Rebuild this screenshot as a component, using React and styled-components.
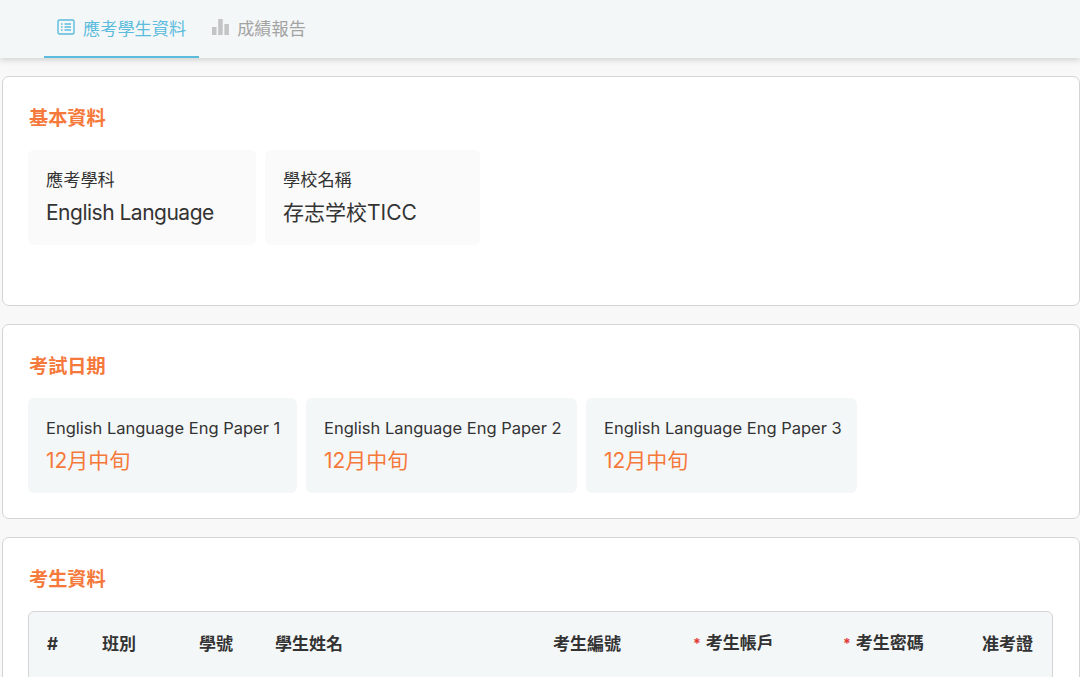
import styled, { createGlobalStyle } from "styled-components";

const GlobalStyle = createGlobalStyle`
  html, body {
    margin: 0;
    height: 100%;
    overflow: hidden;
    background: #f8f8f8;
    font-family: Inter, "Noto Sans CJK TC", sans-serif;
    color: #333;
  }
  * { box-sizing: border-box; }
`;

const Nav = styled.nav`
  display: flex;
  height: 58px;
  padding-left: 44px;
  background: #f4f7f8;
  box-shadow: 0 2px 6px rgba(0, 0, 0, 0.16);
`;

const Tab = styled.div`
  display: flex;
  align-items: center;
  gap: 8px;
  height: 58px;
  padding: 0 13px 2px;
  font-size: 17.2px;
  color: ${(p) => (p.$active ? "#5bbcdc" : "#a3a3a3")};
  border-bottom: 2px solid ${(p) => (p.$active ? "#5bbcdc" : "transparent")};
`;

const Main = styled.main`
  padding: 18px 0 0 2px;
`;

const Card = styled.section`
  height: ${(p) => p.$height}px;
  margin-bottom: 18px;
  padding: 29px 26px 0 25px;
  background: #fff;
  border: 1px solid #d4d4d4;
  border-radius: 7px;
`;

const Title = styled.h2`
  margin: 0 0 19px;
  padding-left: 1px;
  height: 25px;
  line-height: 25px;
  font-size: 19.2px;
  font-weight: 700;
  color: #f5793b;
`;

const Row = styled.div`
  display: flex;
  gap: 9px;
`;

const Item = styled.div`
  width: ${(p) => p.$width}px;
  height: 95px;
  padding: 19px 0 0 18px;
  background: ${(p) => (p.$tone === "blue" ? "#f4f7f8" : "#fafafa")};
  border-radius: 6px;
`;

const Label = styled.div`
  height: 22px;
  line-height: 22px;
  font-size: ${(p) => (p.$latin ? "16.5px" : "17.2px")};
  white-space: nowrap;
`;

const Value = styled.div`
  margin-top: 8px;
  height: 28px;
  line-height: 28px;
  font-size: 21px;
  letter-spacing: ${(p) => (p.$tight ? "-0.5px" : "0")};
  white-space: nowrap;
  color: ${(p) => (p.$accent ? "#f5793b" : "#333")};
`;

const Table = styled.div`
  height: 120px;
  background: #f4f7f8;
  border: 1px solid #d4d4d4;
  border-radius: 6px;
`;

const HeadRow = styled.div`
  display: grid;
  grid-template-columns: 55px 97px 76px 278px 140px 150px 139px auto;
  align-items: center;
  height: 63px;
  padding: 0 18px;
  font-size: 17px;
  line-height: 24px;
  font-weight: 700;
`;

const Required = styled.span`
  margin-right: 5px;
  font-size: 14px;
  color: #e53935;
`;

const ListIcon = () => (
  <svg width="18" height="18" viewBox="0 0 18 18" fill="none" stroke="currentColor" strokeWidth="1.4">
    <rect x="1" y="2" width="16" height="14" rx="1.5" />
    <path d="M4 6h1.6M7.5 6H14M4 9h1.6M7.5 9H14M4 12h1.6M7.5 12H14" />
  </svg>
);

const BarsIcon = () => (
  <svg width="17" height="16" viewBox="0 0 17 16" fill="currentColor" opacity="0.6">
    <rect x="0" y="8" width="4.5" height="8" />
    <rect x="6.2" y="0" width="4.5" height="16" />
    <rect x="12.4" y="5" width="4.5" height="11" />
  </svg>
);

const papers = [
  { name: "English Language Eng Paper 1", width: 269 },
  { name: "English Language Eng Paper 2", width: 271 },
  { name: "English Language Eng Paper 3", width: 271 },
];

function App() {
  return (
    <>
      <GlobalStyle />
      <Nav>
        <Tab $active>
          <ListIcon />
          應考學生資料
        </Tab>
        <Tab>
          <BarsIcon />
          成績報告
        </Tab>
      </Nav>
      <Main>
        <Card $height={230}>
          <Title>基本資料</Title>
          <Row>
            <Item $width={228}>
              <Label>應考學科</Label>
              <Value $tight>English Language</Value>
            </Item>
            <Item $width={215}>
              <Label>學校名稱</Label>
              <Value>存志学校TICC</Value>
            </Item>
          </Row>
        </Card>
        <Card $height={195}>
          <Title>考試日期</Title>
          <Row>
            {papers.map((paper) => (
              <Item key={paper.name} $width={paper.width} $tone="blue">
                <Label $latin>{paper.name}</Label>
                <Value $accent>12月中旬</Value>
              </Item>
            ))}
          </Row>
        </Card>
        <Card $height={200}>
          <Title>考生資料</Title>
          <Table>
            <HeadRow>
              <span>#</span>
              <span>班別</span>
              <span>學號</span>
              <span>學生姓名</span>
              <span>考生編號</span>
              <span><Required>*</Required>考生帳戶</span>
              <span><Required>*</Required>考生密碼</span>
              <span>准考證</span>
            </HeadRow>
          </Table>
        </Card>
      </Main>
    </>
  );
}

export default App;
